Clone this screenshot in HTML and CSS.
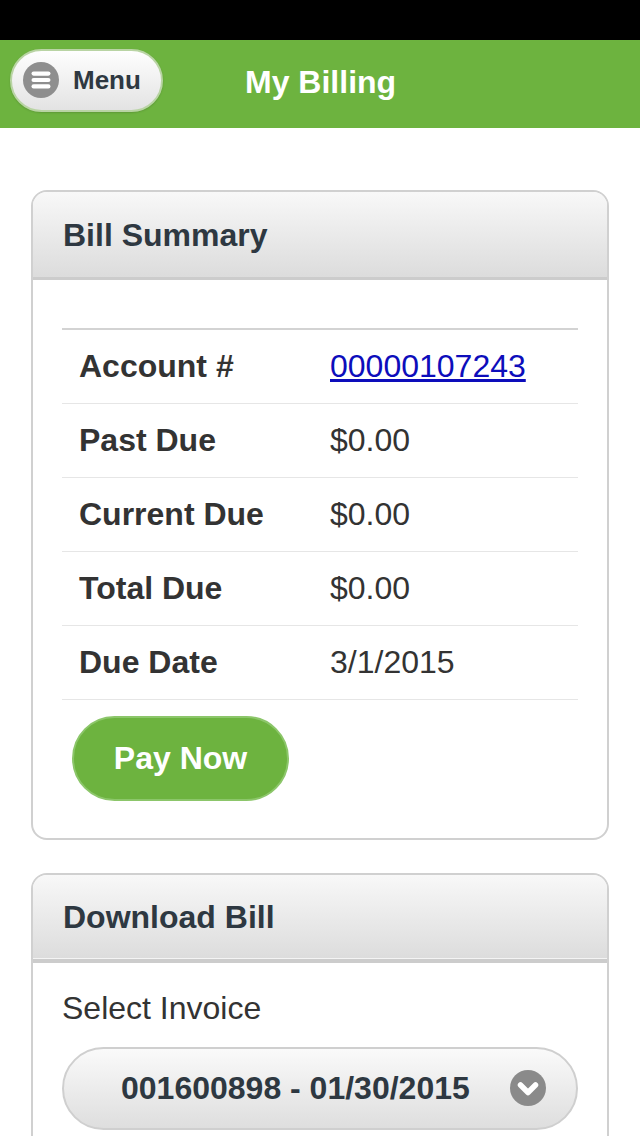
FILE: index.html
```html
<!DOCTYPE html>
<html>
<head>
<meta charset="utf-8">
<link rel="stylesheet" href="styles.css">
</head>
<body>
<div class="statusbar"></div>
<header class="topbar">
  <button class="menu-btn">
    <span class="menu-icon">
      <svg width="36" height="36" viewBox="0 0 36 36"><circle cx="18" cy="18" r="18" fill="#8e8e8e"/><rect x="8.5" y="9.5" width="19" height="4.2" rx="2.1" fill="#fff"/><rect x="8.5" y="15.9" width="19" height="4.2" rx="2.1" fill="#fff"/><rect x="8.5" y="22.3" width="19" height="4.2" rx="2.1" fill="#fff"/></svg>
    </span>
    <span class="menu-label">Menu</span>
  </button>
  <h1 class="title">My Billing</h1>
</header>
<main class="content">
  <section class="card">
    <div class="card-head"><h2>Bill Summary</h2></div>
    <div class="card-body summary-body">
      <table class="summary">
        <tr><th>Account #</th><td><a href="#">00000107243</a></td></tr>
        <tr><th>Past Due</th><td>$0.00</td></tr>
        <tr><th>Current Due</th><td>$0.00</td></tr>
        <tr><th>Total Due</th><td>$0.00</td></tr>
        <tr><th>Due Date</th><td>3/1/2015</td></tr>
      </table>
      <button class="pay-btn">Pay Now</button>
    </div>
  </section>
  <section class="card card-second">
    <div class="card-head head-double"><h2>Download Bill</h2></div>
    <div class="card-body download-body">
      <div class="select-label">Select Invoice</div>
      <div class="select">
        <span class="select-text">001600898 - 01/30/2015</span>
        <span class="select-arrow">
          <svg width="36" height="36" viewBox="0 0 36 36"><circle cx="18" cy="18" r="18" fill="#8a8a8a"/><path d="M10.5 15 L18 22.5 L25.5 15" fill="none" stroke="#fff" stroke-width="5.5" stroke-linecap="round" stroke-linejoin="round"/></svg>
        </span>
      </div>
    </div>
  </section>
</main>
</body>
</html>
```
FILE: styles.css
```css
* { box-sizing: border-box; }
html, body { margin: 0; padding: 0; }
body {
  width: 640px;
  height: 1136px;
  overflow: hidden;
  background: #fff;
  font-family: "Liberation Sans", Arial, sans-serif;
  color: #333;
}
.statusbar { height: 40px; background: #000; }
.topbar {
  height: 88px;
  background: #6db33f;
  display: flex;
  align-items: center;
  padding-left: 10px;
}
.menu-btn {
  width: 153px;
  height: 63px;
  border-radius: 32px;
  border: 2px solid #b9d4a4;
  background: linear-gradient(#fefefe, #e3e3e3);
  display: flex;
  align-items: center;
  padding: 0 0 0 11px;
  font-family: inherit;
  box-shadow: 0 1px 2px rgba(0,0,0,0.15);
  margin-top: -8px;
}
.menu-icon { display: flex; width: 36px; height: 36px; }
.menu-label {
  margin-left: 14px;
  font-size: 26px;
  font-weight: bold;
  color: #2e3841;
}
.title {
  margin: -4px 0 0 82px;
  font-size: 32px;
  font-weight: bold;
  color: #fff;
}
.content { padding: 62px 31px 0 31px; }
.card {
  border: 2px solid #d0d0d0;
  border-radius: 16px;
  overflow: hidden;
}
.card-second { margin-top: 33px; }
.card-head {
  height: 88px;
  background: linear-gradient(#f8f8f8, #dcdcdc);
  border-bottom: 3px solid #cccccc;
  display: flex;
  align-items: center;
  padding-left: 30px;
}
.head-double {
  box-shadow: inset 0 -1px 0 #f4f4f4;
  border-bottom-width: 4px;
}
.card-head h2 {
  margin: 1px 0 0 0;
  font-size: 32px;
  font-weight: bold;
  color: #2e3841;
}
.summary-body { padding: 48px 29px 37px 29px; }
.summary {
  width: 100%;
  border-collapse: collapse;
  border-top: 2px solid #d3d3d3;
}
.summary th, .summary td {
  height: 74px;
  border-bottom: 1px solid #e6e6e6;
  font-size: 32px;
  text-align: left;
  padding: 0;
  vertical-align: middle;
}
.summary th {
  width: 268px;
  padding-left: 17px;
  font-weight: bold;
  color: #333;
}
.summary td { color: #333; }
.summary a { color: #0d0dbb; text-decoration: underline; }
.pay-btn {
  margin: 16px 0 0 10px;
  width: 217px;
  height: 85px;
  border-radius: 43px;
  border: 2px solid #8cc66a;
  background: #6db33f;
  color: #fff;
  font-family: inherit;
  font-size: 32px;
  font-weight: bold;
  display: block;
}
.download-body { padding: 27px 29px 20px 29px; }
.select-label { font-size: 32px; color: #333; }
.select {
  margin-top: 20px;
  height: 83px;
  border-radius: 42px;
  border: 2px solid #cfcfcf;
  background: linear-gradient(#fafafa, #dedede);
  display: flex;
  align-items: center;
}
.select-text {
  margin-left: 57px;
  font-size: 32px;
  font-weight: bold;
  color: #2e3841;
}
.select-arrow {
  display: flex;
  margin-left: auto;
  margin-right: 30px;
}
```
